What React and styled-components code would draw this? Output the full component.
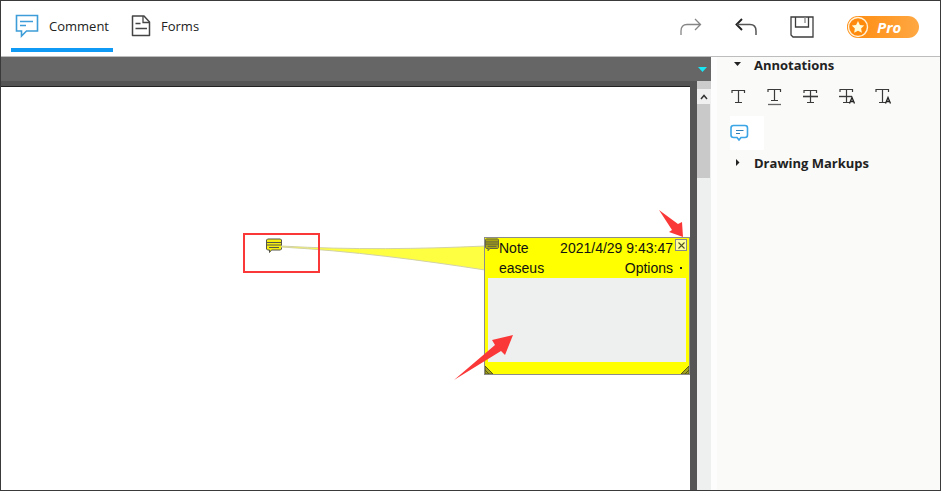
import React, { useState } from 'react';
import styled, { createGlobalStyle } from 'styled-components';

const MARKUP_TOOLS = ['highlight', 'underline', 'strikeout', 'replace', 'insert'];

function CommentIcon() {
  return (
    <svg width="24" height="24" viewBox="0 0 24 24" fill="none" stroke="#3c9dd8">
      <path d="M1.5 1.5h21v15.500h-11l-5 5v-5h-5z" strokeWidth="1.6" />
      <path d="M5 7.500h13M5 11.500h6" strokeWidth="1.5" />
    </svg>
  );
}

function FormsIcon() {
  return (
    <svg width="20" height="22" viewBox="0 0 20 22" fill="none" stroke="#444">
      <path d="M1.500 1h11.500l5.500 6v13.500h-17z" strokeWidth="1.5" strokeLinejoin="round" />
      <path d="M12 1v6.500h6.500" strokeWidth="1.3" />
      <path d="M4.500 8.500h5M4.500 13.500h11.500" strokeWidth="1.7" />
    </svg>
  );
}

function RedoIcon() {
  return (
    <svg width="22" height="18" viewBox="0 0 22 18" fill="none" stroke="#858585" strokeWidth="1.3">
      <path d="M1 17v-4c0-4 2-6.500 6-6.500h13.500M15 1l5.500 5.500-5.500 5.500" />
    </svg>
  );
}

function UndoIcon() {
  return (
    <svg width="22" height="18" viewBox="0 0 22 18" fill="none" stroke="#222" strokeWidth="1.5">
      <path d="M7 1L1.500 6.500 7 12" strokeWidth="1.9" />
      <path d="M2 6.500h13c4 0 6 2.500 6 6.500v4" stroke="#555" />
    </svg>
  );
}

function SaveIcon() {
  return (
    <svg width="24" height="22" viewBox="0 0 24 22" fill="none" stroke="#3c3c3c" strokeWidth="1.3">
      <path d="M1 1h22v20H3l-2-2z" />
      <path d="M5.500 1v10h13V1" />
      <path d="M15 1v6" stroke="#888" />
    </svg>
  );
}

function StarIcon() {
  return (
    <svg width="22" height="22" viewBox="0 0 22 22">
      <circle cx="11" cy="11" r="9.500" fill="#ff8a0c" stroke="#fff3dc" strokeWidth="1.4" />
      <path d="M11 5l1.900 3.900 4.300.6-3.100 3 .8 4.300-3.900-2-3.900 2 .8-4.300-3.100-3 4.300-.6z" fill="#fffbd9" />
    </svg>
  );
}

function MarkupIcon({ kind }) {
  const lifted = kind === 'underline' || kind === 'replace' || kind === 'insert';
  const bottom = kind === 'underline' ? 12.5 : 14.5;
  const top = lifted ? 1.5 : 2.5;
  return (
    <svg width="18" height="18" viewBox="0 0 18 18" fill="none" stroke="#3a3a3a">
      <path
        d={`M2 ${top + 2.5}v-2.500h12.500v2.500M8.500 ${top}V${bottom}M5 ${bottom}h7`}
        strokeWidth="1.2"
      />
      {kind === 'underline' && <path d="M2 16.500h13" strokeWidth="1.300" stroke="#666" />}
      {kind === 'strikeout' && <path d="M1 8.500h15" strokeWidth="1.600" />}
      {kind === 'replace' && <path d="M1 8.500h13" strokeWidth="1.400" />}
      {(kind === 'replace' || kind === 'insert') && (
        <path d="M11.500 15.500l2.500-6 2.500 6M12.500 13.500h3" strokeWidth="1.300" stroke="#222" />
      )}
    </svg>
  );
}

function NoteToolIcon() {
  return (
    <svg width="20" height="18" viewBox="0 0 20 18" fill="none" stroke="#3ba5e6">
      <path
        d="M3.500 1.500h11.500c1.500 0 2.500 1 2.500 2.500v7c0 1.500-1 2.500-2.500 2.500h-4l-2 2.500-2-2.500H3.500c-1.500 0-2.500-1-2.500-2.500V4c0-1.500 1-2.500 2.500-2.500z"
        strokeWidth="1.600"
      />
      <path d="M6 6.500h7.500M6 9.500h4" strokeWidth="1.200" stroke="#2f7fb8" />
    </svg>
  );
}

function NoteGlyph({ size = 16, fill = '#f5ee10' }) {
  return (
    <svg width={size} height={size} viewBox="0 0 16 16" fill={fill} stroke="#55554a">
      <path d="M1.500 1h13l1 1v9l-1 1H5.500l-2 2.500V12h-2l-1-1V2z" strokeWidth="1" />
      <path d="M1 4.500h14M1 7h14M3 9.500h10" strokeWidth="1" fill="none" />
    </svg>
  );
}

function Section({ title, open, onToggle, children }) {
  return (
    <section>
      <SectionHeader type="button" aria-expanded={open} onClick={onToggle}>
        <svg width="8" height="8" viewBox="0 0 8 8" fill="#222">
          <path d={open ? 'M1 1h7L4.500 5z' : 'M3 0v7l3.500-3.500z'} />
        </svg>
        {title}
      </SectionHeader>
      {open && children}
    </section>
  );
}

function NotePopup() {
  const [text, setText] = useState('');

  return (
    <Popup>
      <PopupHeader>
        <NoteGlyph size={14} fill="#a8a414" />
        <PopupLines>
          <PopupLine>
            <span>Note</span>
            <span>2021/4/29 9:43:47</span>
          </PopupLine>
          <PopupLine>
            <span>easeus</span>
            <OptionsBtn type="button">Options</OptionsBtn>
          </PopupLine>
        </PopupLines>
        <PopupSide>
          <CloseBtn type="button" aria-label="Close">
            <svg width="7" height="7" viewBox="0 0 7 7" stroke="#555520" strokeWidth="1.100">
              <path d="M0.500 0.500l6 6M6.500 0.500l-6 6" />
            </svg>
          </CloseBtn>
          <Dot />
        </PopupSide>
      </PopupHeader>
      <NoteText aria-label="Note text" value={text} onChange={(e) => setText(e.target.value)} />
      <PopupFooter>
        <svg width="8" height="8" viewBox="0 0 8 8" stroke="#55551a" fill="#a5a520">
          <path d="M0 0v8h8zM0 4l4 4" />
        </svg>
        <svg width="8" height="8" viewBox="0 0 8 8" stroke="#55551a" fill="#a5a520">
          <path d="M8 0v8H0zM8 4L4 8" />
        </svg>
      </PopupFooter>
    </Popup>
  );
}

function App() {
  const [tab, setTab] = useState('Comment');
  const [showAnnotations, setShowAnnotations] = useState(true);
  const [showDrawing, setShowDrawing] = useState(false);

  return (
    <Window>
      <GlobalStyle />
      <Toolbar>
        <Tabs>
          <Tab type="button" $active={tab === 'Comment'} onClick={() => setTab('Comment')}>
            <CommentIcon />
            Comment
          </Tab>
          <Tab type="button" $active={tab === 'Forms'} onClick={() => setTab('Forms')}>
            <FormsIcon />
            Forms
          </Tab>
        </Tabs>
        <Actions>
          <IconBtn type="button" aria-label="Redo"><RedoIcon /></IconBtn>
          <IconBtn type="button" aria-label="Undo"><UndoIcon /></IconBtn>
          <IconBtn type="button" aria-label="Save"><SaveIcon /></IconBtn>
          <ProBtn type="button">
            <StarIcon />
            <span>Pro</span>
          </ProBtn>
        </Actions>
      </Toolbar>

      <Body>
        <Viewer>
          <DocBar>
            <svg width="9" height="5" viewBox="0 0 9 5" fill="#19e6f5">
              <path d="M0 0h9L4.500 5z" />
            </svg>
          </DocBar>
          <DocArea>
            <PageArea>
              <Page>
                <Marker><NoteGlyph /></Marker>
                <Connector width="204" height="28" viewBox="0 0 204 28">
                  <path
                    d="M0 2C70 6 140 5 204 2V26C140 16 70 7 0 3z"
                    fill="#ffff42"
                    stroke="#d2d2a8"
                    strokeWidth="1"
                  />
                </Connector>
                <RedBox />
                <NotePopup />
                <SmallArrow width="26" height="28" viewBox="0 0 26 28" fill="#fb3838">
                  <path d="M2 0l19 14 4-2 1 15-14-5 3-2z" />
                </SmallArrow>
                <LargeArrow width="62" height="48" viewBox="0 0 62 48" fill="#fb3838">
                  <path d="M1 46L42 11l-3-5L60 1 52 21l-4-4z" />
                </LargeArrow>
              </Page>
            </PageArea>
            <Scrollbar>
              <ScrollUp type="button" aria-label="Scroll up">
                <svg width="8" height="6" viewBox="0 0 8 6" fill="none" stroke="#333" strokeWidth="1.500">
                  <path d="M1 5l3-3.500L7 5" />
                </svg>
              </ScrollUp>
              <Thumb />
            </Scrollbar>
          </DocArea>
        </Viewer>

        <Sidebar>
          <Section
            title="Annotations"
            open={showAnnotations}
            onToggle={() => setShowAnnotations(!showAnnotations)}
          >
            <ToolGrid>
              {MARKUP_TOOLS.map((kind) => (
                <ToolBtn key={kind} type="button" aria-label={kind}>
                  <MarkupIcon kind={kind} />
                </ToolBtn>
              ))}
              <ToolBtn type="button" aria-label="note" $selected>
                <NoteToolIcon />
              </ToolBtn>
            </ToolGrid>
          </Section>
          <Section
            title="Drawing Markups"
            open={showDrawing}
            onToggle={() => setShowDrawing(!showDrawing)}
          />
        </Sidebar>
      </Body>
    </Window>
  );
}

export default App;

const GlobalStyle = createGlobalStyle`
  * {
    box-sizing: border-box;
  }

  body {
    margin: 0;
    font-family: "Open Sans", "Noto Sans", sans-serif;
    color: #222;
  }

  button {
    padding: 0;
    border: 0;
    background: none;
    color: inherit;
    font: inherit;
    cursor: pointer;
  }

  svg {
    display: block;
    flex-shrink: 0;
  }
`;

const Window = styled.div`
  display: flex;
  flex-direction: column;
  min-height: 100vh;
  border: 1px solid #3a3a3a;
  background: #fff;
`;

const Toolbar = styled.header`
  display: flex;
  justify-content: space-between;
  height: 56px;
  padding: 0 21px 0 10px;
  border-bottom: 1px solid #bdbdbd;
`;

const Tabs = styled.nav`
  display: flex;
  gap: 14px;
  height: 51px;
`;

const Tab = styled.button`
  display: flex;
  align-items: center;
  gap: 10px;
  padding: 3px 4px 0;
  border-bottom: 4px solid ${(props) => (props.$active ? '#0f9bf5' : 'transparent')};
  font-size: 13px;
`;

const Actions = styled.div`
  display: flex;
  align-items: center;
  gap: 33px;
  padding-bottom: 4px;
`;

const IconBtn = styled.button`
  display: flex;
`;

const ProBtn = styled.button`
  display: flex;
  align-items: center;
  gap: 8px;
  width: 72px;
  height: 22px;
  border-radius: 11px;
  background: linear-gradient(90deg, #ff8a0c, #ffa843);
  color: #fff;
  font-size: 15px;
  font-style: italic;
  font-weight: 700;
`;

const Body = styled.div`
  display: flex;
  flex: 1;
`;

const Viewer = styled.main`
  display: flex;
  flex-direction: column;
  flex: 1;
`;

const DocBar = styled.div`
  display: flex;
  align-items: center;
  justify-content: flex-end;
  height: 24px;
  padding-right: 4px;
  background: #666;
`;

const DocArea = styled.div`
  display: flex;
  flex: 1;
`;

const PageArea = styled.div`
  display: flex;
  flex: 1;
  padding: 5px 7px 0 0;
  background: #555;
`;

const Page = styled.div`
  position: relative;
  flex: 1;
  border-top: 1px solid #222;
  background: #fff;
`;

const Marker = styled.div`
  position: absolute;
  top: 151px;
  left: 265px;
`;

const Connector = styled.svg`
  position: absolute;
  top: 157px;
  left: 280px;
`;

const RedBox = styled.div`
  position: absolute;
  top: 146px;
  left: 242px;
  width: 77px;
  height: 40px;
  border: 2px solid #fb3838;
`;

const SmallArrow = styled.svg`
  position: absolute;
  top: 123px;
  right: 7px;
`;

const LargeArrow = styled.svg`
  position: absolute;
  top: 247px;
  right: 175px;
`;

const Popup = styled.div`
  position: absolute;
  top: 150px;
  right: 0;
  width: 206px;
  border: 1px solid #8c8c8c;
  background: #ff0;
  color: #111;
  font-family: "Liberation Sans", Arial, sans-serif;
  font-size: 14px;
  line-height: 20px;
`;

const PopupHeader = styled.div`
  display: flex;
  height: 40px;
`;

const PopupLines = styled.div`
  flex: 1;
`;

const PopupLine = styled.div`
  display: flex;
  justify-content: space-between;
`;

const OptionsBtn = styled.button`
  height: 20px;
`;

const PopupSide = styled.div`
  display: flex;
  flex-direction: column;
  align-items: center;
  gap: 16px;
  width: 16px;
  padding-top: 1px;
`;

const CloseBtn = styled.button`
  display: flex;
  align-items: center;
  justify-content: center;
  width: 12px;
  height: 12px;
  border: 1px solid #888;
  background: #ffff9c;
`;

const Dot = styled.span`
  width: 2px;
  height: 2px;
  background: #222;
`;

const NoteText = styled.textarea`
  display: block;
  width: 198px;
  height: 84px;
  margin: 0 3px;
  padding: 4px;
  border: 0;
  outline: 0;
  resize: none;
  background: #eef0f0;
  font: inherit;
`;

const PopupFooter = styled.div`
  display: flex;
  align-items: flex-end;
  justify-content: space-between;
  height: 12px;
`;

const Scrollbar = styled.div`
  width: 14px;
  padding-top: 8px;
  background: linear-gradient(#ccc 8px, #eef0f0 8px);
`;

const ScrollUp = styled.button`
  display: flex;
  align-items: center;
  justify-content: center;
  width: 100%;
  height: 15px;
  background: #f0f0f0;
`;

const Thumb = styled.div`
  height: 74px;
  margin-right: 1px;
  background: #c9c9c9;
`;

const Sidebar = styled.aside`
  width: 229px;
  border-left: 6px solid #fdfdfd;
  background: #fafaf8;
`;

const SectionHeader = styled.button`
  display: flex;
  align-items: center;
  gap: 13px;
  width: 100%;
  height: 16px;
  padding-left: 16px;
  font-size: 13px;
  font-weight: 700;
`;

const ToolGrid = styled.div`
  display: grid;
  grid-template-columns: repeat(5, 36px);
  grid-auto-rows: 36px;
  padding: 7px 0 3px 13px;
`;

const ToolBtn = styled.button`
  display: flex;
  align-items: center;
  width: 34px;
  height: 34px;
  background: ${(props) => (props.$selected ? '#fff' : 'transparent')};
`;
